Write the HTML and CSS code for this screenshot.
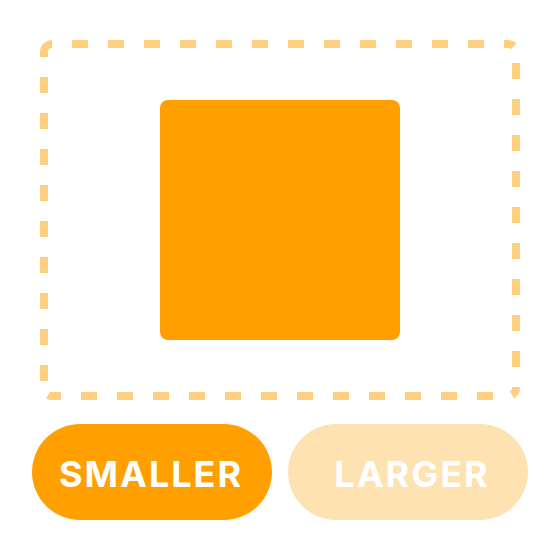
FILE: index.html
```html
<!DOCTYPE html>
<html>
<head>
<meta charset="utf-8">
<link rel="stylesheet" href="styles.css">
</head>
<body>
<div class="page">
  <div class="stage">
    <svg class="frame" width="560" height="440" viewBox="0 0 560 440">
      <g class="dash">
        <path d="M72 44 H484"/>
        <path d="M516 63 V367"/>
        <path d="M493 396 H81"/>
        <path d="M44 381 V77"/>
      </g>
      <g class="corner">
        <path d="M44 57 V52 A8 8 0 0 1 52 44"/>
        <path d="M504 44 H508 A8 8 0 0 1 513.66 46.34"/>
        <path d="M516 387 V388 A8 8 0 0 1 512 394.93"/>
        <path d="M61 396 H52 A8 8 0 0 1 48 394.93"/>
      </g>
    </svg>
    <div class="box"></div>
  </div>
  <div class="buttons">
    <button class="btn btn-active">SMALLER</button>
    <button class="btn btn-muted">LARGER</button>
  </div>
</div>
</body>
</html>
```
FILE: styles.css
```css
html, body {
  margin: 0;
  padding: 0;
  background: #ffffff;
}
.page {
  width: 560px;
  height: 560px;
  display: flex;
  flex-direction: column;
  align-items: center;
  padding-top: 40px;
  box-sizing: border-box;
  position: relative;
}
.stage {
  width: 480px;
  height: 360px;
  display: flex;
  align-items: center;
  justify-content: center;
}
.frame {
  position: absolute;
  left: 0;
  top: 0;
}
.frame path {
  fill: none;
  stroke: #FFCF80;
  stroke-width: 8;
  stroke-linecap: butt;
}
.dash path {
  stroke-dasharray: 16 20;
}
.box {
  position: relative;
  width: 240px;
  height: 240px;
  background: #FFA000;
  border-radius: 8px;
}
.buttons {
  display: flex;
  gap: 16px;
  margin-top: 24px;
}
.btn {
  width: 240px;
  height: 96px;
  border: none;
  border-radius: 48px;
  color: #ffffff;
  font-family: Inter, "Noto Sans", sans-serif;
  font-weight: 700;
  font-size: 36px;
  letter-spacing: 2px;
  display: flex;
  align-items: center;
  justify-content: center;
}
.btn-active {
  background: #FFA000;
  padding: 3px 2px 0 0;
}
.btn-muted {
  background: #FFE2B2;
  padding: 3px 0 0 8px;
}
```
